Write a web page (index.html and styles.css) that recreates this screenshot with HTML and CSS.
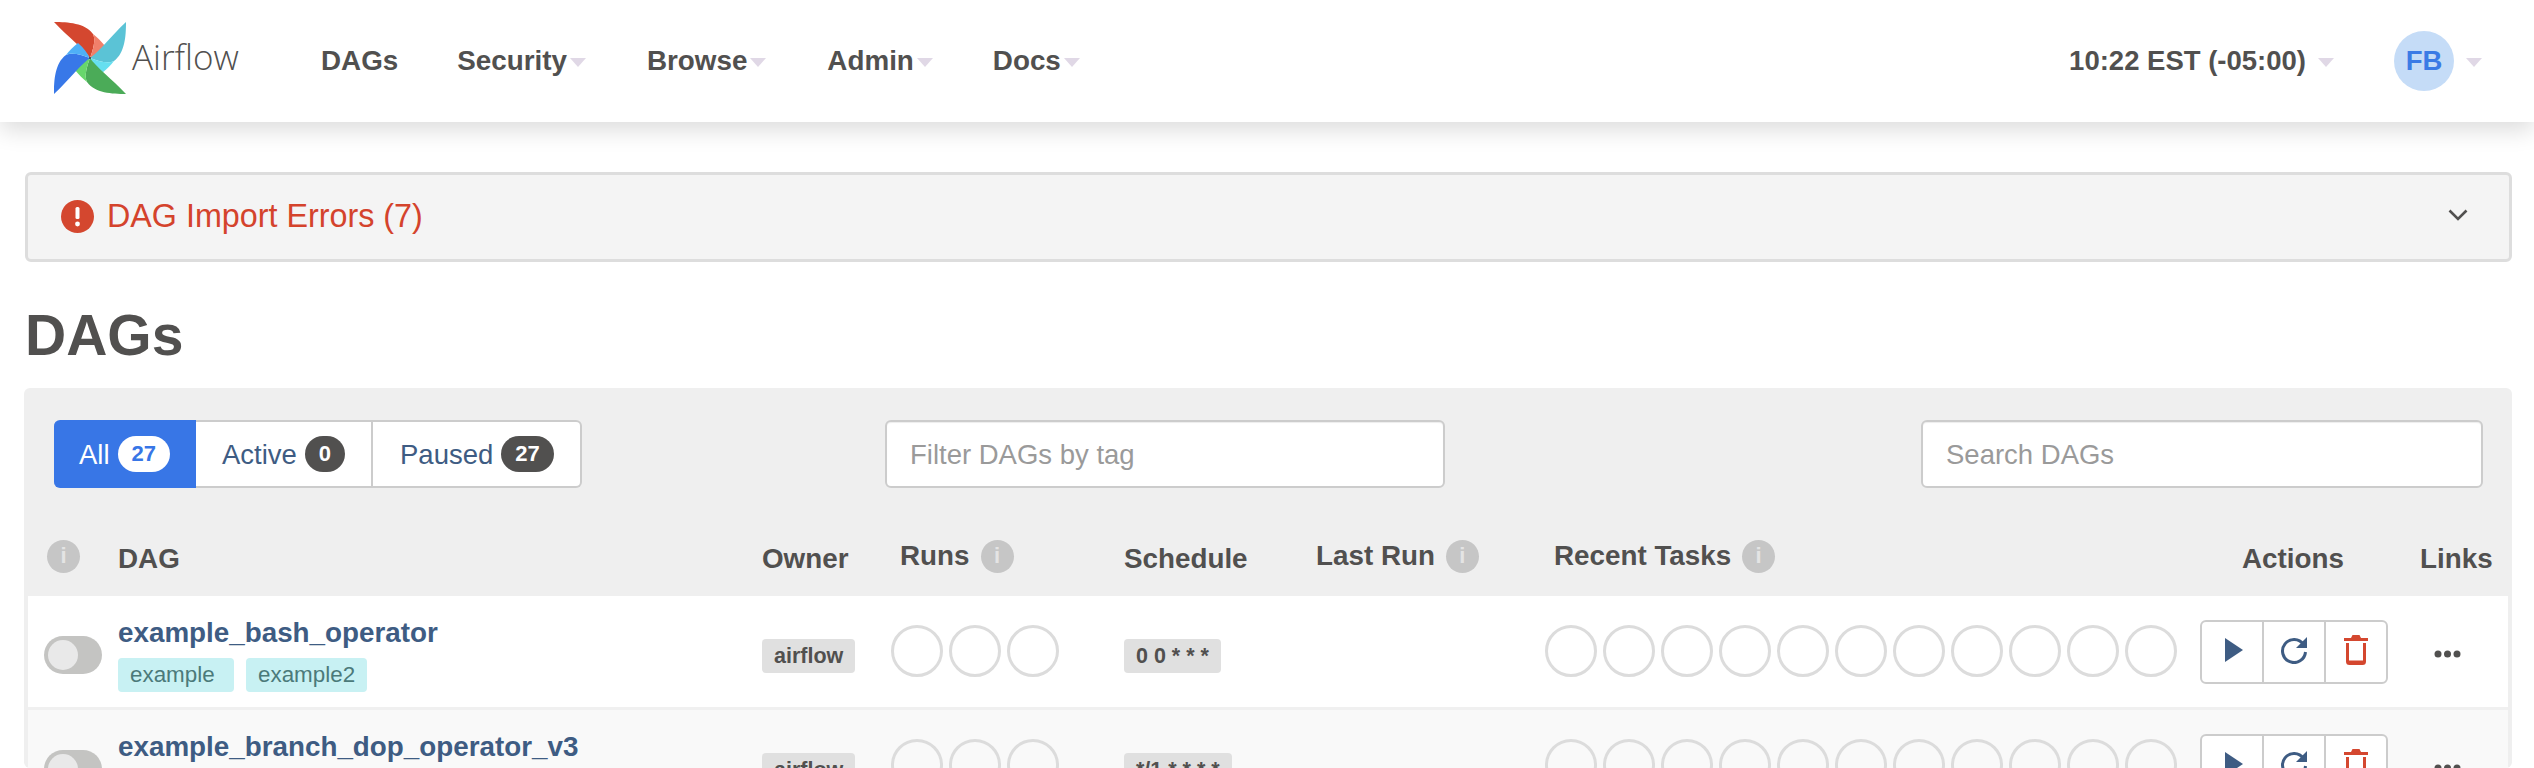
FILE: index.html
```html
<!DOCTYPE html>
<html lang="en">
<head>
<meta charset="utf-8">
<title>DAGs - Airflow</title>
<link rel="stylesheet" href="styles.css">
</head>
<body>
<header class="navbar">
  <a class="brand">
    <svg class="logo" viewBox="0 0 72 72" width="72" height="72">
      <defs>
        <path id="blade" d="M0 0C14 0 31 1 39 12C42 18 39 28 36 36C30 27 14 15 0 0Z"/>
        <path id="blade-l" d="M39 12C43 15 47 19 51 24C46 30 41 33 36 36C39 28 42 18 39 12Z"/>
      </defs>
      <use href="#blade" class="c-red"/><use href="#blade-l" class="c-salmon"/>
      <g transform="rotate(90 36 36)"><use href="#blade" class="c-teal"/><use href="#blade-l" class="c-cyan"/></g>
      <g transform="rotate(180 36 36)"><use href="#blade" class="c-green"/><use href="#blade-l" class="c-lgreen"/></g>
      <g transform="rotate(270 36 36)"><use href="#blade" class="c-blue"/><use href="#blade-l" class="c-lblue"/></g>
      <circle cx="36" cy="36" r="1" fill="#333"/>
    </svg>
    <span class="brand-name">Airflow</span>
  </a>
  <nav class="nav">
    <a class="nav-item nav-dags">DAGs</a>
    <a class="nav-item nav-security">Security<i class="caret"></i></a>
    <a class="nav-item nav-browse">Browse<i class="caret"></i></a>
    <a class="nav-item nav-admin">Admin<i class="caret"></i></a>
    <a class="nav-item">Docs<i class="caret"></i></a>
  </nav>
  <div class="nav-right">
    <span class="clock">10:22 EST (-05:00)</span><i class="caret caret-clock"></i>
    <span class="avatar">FB</span><i class="caret caret-user"></i>
  </div>
</header>
<main class="page">
  <section class="alert">
    <svg class="alert-icon" viewBox="0 0 33 33" width="33" height="33"><circle cx="16.5" cy="16.5" r="16.5" fill="#d4472f"/><rect x="14.5" y="7" width="4" height="12" rx="1.5" fill="#fff"/><circle cx="16.5" cy="24" r="2.4" fill="#fff"/></svg>
    <span class="alert-text">DAG Import Errors (7)</span>
    <svg class="chevron" viewBox="0 0 20 12" width="20" height="12"><path d="M1.5 1.5L10 10L18.5 1.5" fill="none" stroke="#51504f" stroke-width="2.6"/></svg>
  </section>
  <h1 class="title">DAGs</h1>
  <section class="panel">
    <div class="toolbar">
      <div class="filters">
        <a class="filter filter-on">All <span class="count count-on">27</span></a>
        <a class="filter filter-active">Active <span class="count count-small">0</span></a>
        <a class="filter filter-paused">Paused <span class="count">27</span></a>
      </div>
      <input class="field" placeholder="Filter DAGs by tag">
      <span></span>
      <input class="field" placeholder="Search DAGs">
    </div>
    <div class="grid head">
      <div class="cell-info"><i class="info">i</i></div>
      <div class="h-low">DAG</div>
      <div class="h-low">Owner</div>
      <div class="h-pad">Runs <i class="info">i</i></div>
      <div class="h-low">Schedule</div>
      <div>Last Run <i class="info">i</i></div>
      <div class="h-pad">Recent Tasks <i class="info">i</i></div>
      <div class="h-low h-actions">Actions</div>
      <div class="h-low">Links</div>
    </div>

    <div class="grid row">
      <div><span class="toggle"><i class="knob"></i></span></div>
      <div class="dag">
        <a class="dag-name">example_bash_operator</a>
        <div class="tags"><span class="tag">example</span><span class="tag">example2</span></div>
      </div>
      <div><span class="pill">airflow</span></div>
      <div class="rings"><i></i><i></i><i></i></div>
      <div><span class="pill">0 0 * * *</span></div>
      <div></div>
      <div class="rings"><i></i><i></i><i></i><i></i><i></i><i></i><i></i><i></i><i></i><i></i><i></i></div>
      <div class="actions">
        <a class="act act-play"><svg viewBox="0 0 18 24" width="18" height="24"><path d="M0 0L18 12L0 24Z" fill="#3e5c83"/></svg></a>
        <a class="act"><svg viewBox="0 0 28 28" width="28" height="28"><path d="M23.5 8.5A11.5 11.5 0 1 0 25.5 16" fill="none" stroke="#3e5c83" stroke-width="3"/><path d="M27 1V12H16Z" fill="#3e5c83"/></svg></a>
        <a class="act"><svg viewBox="0 0 24 30" width="24" height="30"><path d="M0 3H7L8.5 0H15.500L17 3H24V6H0Z" fill="#d4472f"/><path d="M3.500 8V26.500Q3.500 28.500 5.500 28.500H18.500Q20.500 28.500 20.500 26.500V8" fill="none" stroke="#d4472f" stroke-width="3"/><path d="M3.500 27H20.500" stroke="#d4472f" stroke-width="3"/></svg></a>
      </div>
      <div class="links"><svg viewBox="0 0 27 8" width="27" height="8"><circle cx="4" cy="4" r="3.500" fill="#51504f"/><circle cx="13.500" cy="4" r="3.500" fill="#51504f"/><circle cx="23" cy="4" r="3.500" fill="#51504f"/></svg></div>
    </div>

    <div class="grid row row-alt">
      <div><span class="toggle"><i class="knob"></i></span></div>
      <div class="dag">
        <a class="dag-name">example_branch_dop_operator_v3</a>
        <div class="tags"><span class="tag">example</span></div>
      </div>
      <div><span class="pill">airflow</span></div>
      <div class="rings"><i></i><i></i><i></i></div>
      <div><span class="pill">*/1 * * * *</span></div>
      <div></div>
      <div class="rings"><i></i><i></i><i></i><i></i><i></i><i></i><i></i><i></i><i></i><i></i><i></i></div>
      <div class="actions">
        <a class="act act-play"><svg viewBox="0 0 18 24" width="18" height="24"><path d="M0 0L18 12L0 24Z" fill="#3e5c83"/></svg></a>
        <a class="act"><svg viewBox="0 0 28 28" width="28" height="28"><path d="M23.5 8.5A11.5 11.5 0 1 0 25.5 16" fill="none" stroke="#3e5c83" stroke-width="3"/><path d="M27 1V12H16Z" fill="#3e5c83"/></svg></a>
        <a class="act"><svg viewBox="0 0 24 30" width="24" height="30"><path d="M0 3H7L8.5 0H15.500L17 3H24V6H0Z" fill="#d4472f"/><path d="M3.500 8V26.500Q3.500 28.500 5.500 28.500H18.500Q20.500 28.500 20.500 26.500V8" fill="none" stroke="#d4472f" stroke-width="3"/><path d="M3.500 27H20.500" stroke="#d4472f" stroke-width="3"/></svg></a>
      </div>
      <div class="links"><svg viewBox="0 0 27 8" width="27" height="8"><circle cx="4" cy="4" r="3.500" fill="#51504f"/><circle cx="13.500" cy="4" r="3.500" fill="#51504f"/><circle cx="23" cy="4" r="3.500" fill="#51504f"/></svg></div>
    </div>
  </section>
</main>
</body>
</html>
```
FILE: styles.css
```css
* { box-sizing: border-box; }
html, body { margin: 0; height: 768px; overflow: hidden; background: #fff; }
body { font-family: "Liberation Sans", Arial, sans-serif; color: #51504f; }
i { font-style: normal; }

.navbar { height: 122px; display: flex; align-items: center; background: #fff; box-shadow: 0 8px 22px rgba(0,0,0,.14); position: relative; padding-left: 54px; }
.brand { display: flex; align-items: center; width: 267px; }
.logo { display: block; flex: none; margin-top: -6px; }
.c-red { fill: #d4472f; } .c-salmon { fill: #f1806a; }
.c-teal { fill: #5bc3d6; } .c-cyan { fill: #66dff0; }
.c-green { fill: #4bab58; } .c-lgreen { fill: #67d76c; }
.c-blue { fill: #3878e8; } .c-lblue { fill: #4fb0f7; }
.brand-name { font-family: "Open Sans", sans-serif; font-weight: 300; font-size: 35px; margin-left: 6px; margin-top: -10px; color: #51504f; }
.nav { display: flex; align-items: center; font-size: 27.800px; font-weight: 700; }
.nav-item { display: flex; align-items: center; }
.nav-dags { margin-right: 59px; }
.nav-security { margin-right: 61px; }
.nav-browse { margin-right: 61px; }
.nav-admin { margin-right: 60px; }
.caret { display: inline-block; width: 0; height: 0; border: 8px solid transparent; border-top: 9px solid #e0d8e6; border-bottom: 0; margin-left: 3px; margin-top: 3px; }
.nav-right { margin-left: auto; display: flex; align-items: center; font-size: 27.500px; font-weight: 700; padding-right: 52px; }
.caret-clock { margin-left: 12px; margin-right: 60px; }
.avatar { width: 60px; height: 60px; border-radius: 50%; background: #c5dcf7; color: #3b7be5; display: flex; align-items: center; justify-content: center; }
.caret-user { margin-left: 12px; }

.page { padding: 50px 22px 0 25px; }
.alert { height: 90px; border: 3px solid #ddd; border-radius: 6px; background: #f4f4f4; display: flex; align-items: center; padding: 0 41px 2px 33px; }
.alert-text { font-size: 32.300px; color: #d4432c; margin-left: 13px; }
.chevron { margin-left: auto; margin-top: -2px; }
.title { font-size: 57px; font-weight: 700; margin: 0; line-height: 66px; padding-top: 40px; height: 126px; }

.panel { background: #efefef; border-radius: 6px; margin-left: -1px; padding: 32px 4px 0 4px; height: 380px; }
.toolbar { display: grid; grid-template-columns: 831px 560px 1fr 562px; margin: 0 25px 0 26px; height: 68px; }
.filters { display: flex; width: 528px; height: 68px; font-size: 27.500px; }
.filter { display: flex; align-items: center; gap: 8px; padding: 2px 14px 0 25px; background: #fff; color: #3e5c83; border: 2px solid #ccc; border-left-width: 0; }
.filter:first-child { border-radius: 6px 0 0 6px; }
.filter:last-child { border-radius: 0 6px 6px 0; flex: 1; }
.filter-on { background: #3876e6; color: #fff; border-color: #3876e6; width: 142px; }
.filter-active { width: 177px; padding-left: 26px; }
.filter-paused { padding-left: 27px; }
.count { font-size: 22px; font-weight: 700; background: #51504f; color: #fff; border-radius: 18px; height: 36px; padding: 0 14px; display: flex; align-items: center; justify-content: center; margin-top: -2px; }
.count-on { background: #fff; color: #3876e6; }
.count-small { padding: 0 14px; width: 40px; }
.field { height: 68px; width: 100%; border: 2px solid #ccc; border-radius: 6px; padding: 2px 23px 0; font: 27.500px "Liberation Sans", Arial, sans-serif; background: #fff; box-shadow: inset 0 1px 1px rgba(0,0,0,.075); }
.field::placeholder { color: #9a9a9a; opacity: 1; }

.grid { display: grid; grid-template-columns: 90px 644px 129px 233px 192px 229px 655px 220px 88px; align-items: center; }
.head { height: 108px; font-size: 27.800px; font-weight: 700; padding-top: 28px; }
.head > div { display: flex; align-items: center; gap: 11px; white-space: nowrap; }
.h-low { padding-top: 5px; }
.h-pad { padding-left: 9px; }
.h-actions { padding-left: 42px; }
.cell-info { padding-left: 19px; }
.info { width: 33px; height: 33px; flex: none; border-radius: 50%; background: #c6c6c6; color: #e4e4e4; font: 700 22px "Liberation Sans", Arial, sans-serif; display: flex; align-items: center; justify-content: center; }

.row { height: 114px; background: #fff; border-bottom: 3px solid #f0f0f0; padding-bottom: 3px; }
.row-alt { background: #f9f9f9; }
.toggle { display: block; width: 58px; height: 38px; margin: 9px 0 0 16px; background: #c4c4c2; border-radius: 19px; padding: 4px; }
.knob { display: block; width: 30px; height: 30px; border-radius: 50%; background: #e9e9e9; }
.dag { display: flex; flex-direction: column; gap: 9px; margin-top: 9px; }
.dag-name { font-size: 27.800px; font-weight: 700; color: #3e5c83; line-height: 32px; }
.tags { display: flex; gap: 12px; }
.tag { font-size: 22.400px; height: 34px; line-height: 34px; padding: 0 12px; background: #c8f1f3; color: #4b7a7a; border-radius: 4px; min-width: 116px; }
.pill { display: inline-block; font-size: 21.500px; font-weight: 700; height: 34px; line-height: 34px; padding: 0 12px; background: #e0e0e0; border-radius: 4px; margin-top: 12px; }
.rings { display: flex; gap: 6px; margin-top: 2px; }
.rings i { display: block; width: 52px; height: 52px; border-radius: 50%; border: 3px solid #dcdcdc; }
.actions { display: flex; width: 188px; height: 64px; border: 2px solid #ccc; border-radius: 6px; margin-top: 4px; background: #fff; }
.act { display: flex; align-items: center; justify-content: center; flex: 1 1 0; border-left: 2px solid #ccc; padding-bottom: 4px; }
.act:first-child { border-left: 0; }
.act-play { flex: 0 0 60px; padding-left: 4px; }
.links { padding: 7px 0 0 14px; line-height: 0; }
```
